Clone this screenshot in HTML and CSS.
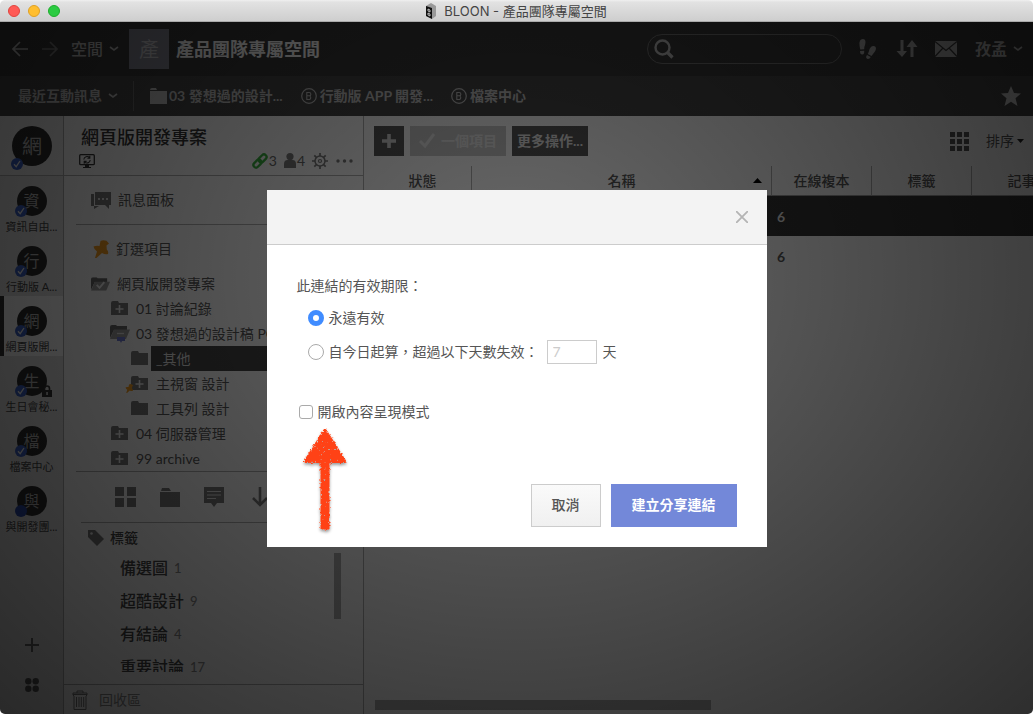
FILE: index.html
```html
<!DOCTYPE html>
<html lang="zh-Hant">
<head>
<meta charset="utf-8">
<title>BLOON - 產品團隊專屬空間</title>
<link rel="stylesheet" href="styles.css">
</head>
<body>
<svg class="defs" aria-hidden="true">
  <symbol id="chevron" viewBox="0 0 10 6"><path d="M1 1l4 3 4-3" fill="none" stroke="currentColor" stroke-width="1.6"/></symbol>
  <symbol id="folder" viewBox="0 0 17 16"><path d="M0 2q0-2 2-2h4l1 2H0zM0 3h17v13H0z" fill="currentColor"/></symbol>
  <symbol id="folder-sm" viewBox="0 0 18 16"><path d="M0 2q0-2 2-2h5l1 2h9v12H0z" fill="currentColor"/></symbol>
  <symbol id="folder-plus" viewBox="0 0 18 16"><path d="M0 2q0-2 2-2h5l1 2h9v12H0z" fill="currentColor"/><path d="M8.500 4v8M4.500 8h8" stroke="#eee" stroke-width="1.600"/></symbol>
  <symbol id="folder-open" viewBox="0 0 20 14"><path d="M0 2q0-2 2-2h4l1 1h10v4H4L0 13z" fill="#666"/><path d="M4 4.500h16l-4 9.500H0z" fill="#999"/></symbol>
  <symbol id="brand" viewBox="0 0 16 16"><circle cx="8" cy="8" r="7.300" fill="none" stroke="currentColor" stroke-width="1.200"/><path d="M5.800 4.500v7h2.700a2 2 0 0 0 0-3.700H5.800h2.400a1.600 1.600 0 0 0 0-3.300z" fill="none" stroke="currentColor" stroke-width="1.100"/></symbol>
  <symbol id="badge" viewBox="0 0 12 12"><circle cx="6" cy="6" r="6" fill="#3a60c4"/><path d="M3 6.300l2.200 2.400L9 3" fill="none" stroke="#eee" stroke-width="1.300"/></symbol>
  <symbol id="pin" viewBox="0 0 17 18"><path d="M7.500 1Q10-.5 13.500 0.800L16 3.500l-2.500 2 .3 4q2 2 1.200 4.500-3 .8-6-1L3.500 18H2l2-6.500Q1 9.500 .5 6.500q2.500-1 6-.5z" fill="#f09a20"/></symbol>
</svg>

<div class="window">
  <header class="titlebar">
    <span class="lights"><i class="light red"></i><i class="light amber"></i><i class="light green"></i></span>
    <svg width="10" height="16" viewBox="0 0 10 16"><path d="M0 3l5-3 5 3v10l-4 3-6-3z" fill="#999"/><path d="M0 3l6 2v11l-6-3z" fill="#111"/><path d="M2 6l2 1v2L2 8zM2 10l2 1v2l-2-1z" fill="none" stroke="#ddd" stroke-width=".8"/></svg>
    <span>BLOON - 產品團隊專屬空間</span>
  </header>

  <div class="app">
    <nav class="topbar">
      <button class="plain" aria-label="上一頁"><svg width="16" height="16" viewBox="0 0 16 16"><path d="M16 8H1M8 1L1 8l7 7" fill="none" stroke="#b4b4b4" stroke-width="1.700"/></svg></button>
      <button class="plain next" aria-label="下一頁"><svg width="16" height="16" viewBox="0 0 16 16"><path d="M0 8h15M8 1l7 7-7 7" fill="none" stroke="#777" stroke-width="1.700"/></svg></button>
      <button class="plain spaces">空間 <svg width="10" height="6"><use href="#chevron"/></svg></button>
      <span class="space-logo">產</span>
      <h1 class="space-name">產品團隊專屬空間</h1>
      <label class="search">
        <svg width="20" height="20" viewBox="0 0 20 20"><circle cx="8.500" cy="8.500" r="7" fill="none" stroke="#b4b4b4" stroke-width="2.400"/><path d="M13.500 13.500l5 5" stroke="#b4b4b4" stroke-width="3.200"/></svg>
        <input type="search" aria-label="搜尋">
      </label>
      <button class="plain steps" aria-label="足跡"><svg width="18" height="20" viewBox="0 0 18 20"><g fill="#aaa"><path d="M4 0C1 0 .3 3 .5 5.500c.1 2 .5 3.500.8 5l3.900-.3Q5 8 6 6C7 3 6.500 0 4 0z"/><path d="M1 12l4.200-.3q.4 3.600-1.900 3.800-2.300.1-2.300-3.500z"/><path d="M14.500 7c3.500.5 2.800 4 1 6l-3 4-3.700-2q.8-1.500 1.200-3C10.500 9.500 12 6.600 14.500 7z"/><path d="M8 16l3.800 2q-1.500 2.500-3.700 1.800-1.900-1-.1-3.800z"/></g></svg></button>
      <button class="plain transfer" aria-label="傳輸"><svg width="22" height="18" viewBox="0 0 22 18"><path d="M4.500 0h3v11h3.500L6 17 .5 11h4zM14.500 17h3V7h4L16 0l-5.500 7h4z" fill="#aaa"/></svg></button>
      <button class="plain mail" aria-label="郵件"><svg width="22" height="16" viewBox="0 0 22 16"><path d="M0 0h22v16H0z" fill="#aaa"/><path d="M0 .5l11 9 11-9M0 15.500L8 7M22 15.500L14 7" fill="none" stroke="#363636" stroke-width="1.200"/></svg></button>
      <button class="plain user">孜孟 <svg width="10" height="6"><use href="#chevron"/></svg></button>
    </nav>

    <nav class="bookmarks">
      <button class="plain recent">最近互動訊息 <svg width="10" height="6"><use href="#chevron"/></svg></button>
      <a href="#" class="mark"><svg width="17" height="16"><use href="#folder"/></svg>03 發想過的設計...</a>
      <a href="#" class="mark"><svg width="16" height="16"><use href="#brand"/></svg>行動版 APP 開發...</a>
      <a href="#" class="mark"><svg width="16" height="16"><use href="#brand"/></svg>檔案中心</a>
      <button class="plain star" aria-label="收藏"><svg width="20" height="20" viewBox="0 0 20 20"><path d="M10 0l3 7 7 .5-5.500 4.700L16.500 20 10 15.800 3.500 20l2-7.800L0 7.500 7 7z" fill="#c8c8c8"/></svg></button>
    </nav>

    <main class="main">
      <aside class="rail">
        <a href="#" class="rail-current" aria-label="網頁版開發專案"><span class="disc">網<svg class="tick" width="12" height="12"><use href="#badge"/></svg></span></a>
        <a href="#" class="rail-item"><span class="disc">資<svg class="tick" width="12" height="12"><use href="#badge"/></svg></span>資訊自由...</a>
        <a href="#" class="rail-item"><span class="disc">行<svg class="tick" width="12" height="12"><use href="#badge"/></svg></span>行動版 A...</a>
        <a href="#" class="rail-item active"><span class="disc">網<svg class="tick" width="12" height="12"><use href="#badge"/></svg></span>網頁版開...</a>
        <a href="#" class="rail-item"><span class="disc">生<svg class="tick" width="12" height="12"><use href="#badge"/></svg><svg class="lock" width="10" height="12" viewBox="0 0 10 12"><path d="M2.500 6V3.500a2.500 2.500 0 0 1 5 0V6" fill="none" stroke="#333" stroke-width="1.600"/><path d="M0 5h10v7H0z" fill="#333"/><path d="M4.300 7h1.500v3H4.300z" fill="#ddd"/></svg></span>生日會秘...</a>
        <a href="#" class="rail-item"><span class="disc">檔<svg class="tick" width="12" height="12"><use href="#badge"/></svg></span>檔案中心</a>
        <a href="#" class="rail-item"><span class="disc">與<svg class="tick" width="12" height="12" viewBox="0 0 12 12"><circle cx="6" cy="6" r="6" fill="#2a48a8"/></svg></span>與開發團...</a>
        <div class="rail-tools">
          <button class="plain" aria-label="新增"><svg width="14" height="14" viewBox="0 0 14 14"><path d="M7 0v14M0 7h14" stroke="#666" stroke-width="2"/></svg></button>
          <button class="plain" aria-label="全部"><svg width="14" height="14" viewBox="0 0 14 14" fill="#555"><circle cx="3.300" cy="3.300" r="3.200"/><circle cx="10.700" cy="3.300" r="3.200"/><circle cx="3.300" cy="10.700" r="3.200"/><circle cx="10.700" cy="10.700" r="3.200"/></svg></button>
        </div>
      </aside>

      <aside class="side">
        <header class="project">
          <h2>網頁版開發專案</h2>
          <div class="project-meta">
            <svg width="16" height="14" viewBox="0 0 16 14"><rect x=".7" y=".7" width="14.600" height="10" rx="1" fill="none" stroke="#333" stroke-width="1.300"/><path d="M6 11h4v2h2v1H4v-1h2z" fill="#333"/><path d="M4.800 5.500A3.200 3.200 0 0 1 10.500 3.800M11.200 6A3.200 3.200 0 0 1 5.500 7.800M10.800 1.800v2.400H8.400M5.200 9.700V7.400h2.400" fill="none" stroke="#333" stroke-width="1.100"/></svg>
            <span class="stat links"><svg width="16" height="16" viewBox="0 0 16 16"><g fill="none" stroke="#38ac3e" stroke-width="2.300"><rect x="-4.500" y="-2.600" width="9" height="5.200" rx="2.600" transform="translate(10.600 5.400) rotate(-45)"/><rect x="-4.500" y="-2.600" width="9" height="5.200" rx="2.600" transform="translate(5.400 10.600) rotate(-45)"/></g></svg>3</span>
            <span class="stat"><svg width="12" height="16" viewBox="0 0 12 16"><path d="M0 15V11q0-4 3.500-4h5Q12 7 12 11v4z" fill="#777"/><circle cx="6" cy="3.600" r="3.600" fill="#777"/></svg>4</span>
            <svg class="gear" width="16" height="16" viewBox="0 0 16 16" fill="none" stroke="#777"><circle cx="8" cy="8" r="5" stroke-width="1.500"/><circle cx="8" cy="8" r="1.500" stroke-width="1.200"/><path d="M8 0v3M8 13v3M0 8h3M13 8h3M2.300 2.300l2.100 2.100M11.600 11.600l2.100 2.100M2.300 13.700l2.100-2.100M11.600 4.400l2.100-2.100" stroke-width="1.700"/></svg>
            <svg width="17" height="4" viewBox="0 0 17 4" fill="#777"><circle cx="2" cy="2" r="1.700"/><circle cx="8.500" cy="2" r="1.700"/><circle cx="15" cy="2" r="1.700"/></svg>
          </div>
        </header>

        <a href="#" class="board"><svg width="20" height="17" viewBox="0 0 20 17"><path d="M4 0h16v13h-2v4l-4-4H4z" fill="#777"/><path d="M0 2h3v12h5l-5 3v-3H0z" fill="#777"/><path d="M7 6h2v2H7zM11 6h2v2h-2zM15 6h2v2h-2z" fill="#ddd"/></svg>訊息面板</a>

        <div class="tree">
          <a href="#" class="pinned"><svg width="17" height="18"><use href="#pin"/></svg>釘選項目</a>
          <a href="#" class="root"><svg width="19" height="14" viewBox="0 0 20 14"><use href="#folder-open" width="20" height="14"/><path d="M6 8l3 3 5-6" fill="none" stroke="#eee" stroke-width="2"/></svg>網頁版開發專案</a>
          <a href="#" class="node"><svg width="18" height="16"><use href="#folder-plus"/></svg><span>01 討論紀錄</span></a>
          <a href="#" class="node"><svg width="20" height="18" viewBox="0 0 20 18"><use href="#folder-open" width="20" height="14"/><path d="M7 8.500h7" stroke="#ddd" stroke-width="1.300"/><path d="M7 12h8v4h-3l-1 2-1-2H7z" fill="#6f7ad0"/></svg><span>03 發想過的設計稿 PO 區</span></a>
          <a href="#" class="node deep selected"><svg width="18" height="16"><use href="#folder-sm"/></svg><span>_其他</span></a>
          <a href="#" class="node deep"><svg width="18" height="16"><use href="#folder-plus"/></svg><svg class="mini-pin" width="8" height="9" viewBox="0 0 17 18"><use href="#pin" width="17" height="18"/></svg><span>主視窗 設計</span></a>
          <a href="#" class="node deep"><svg width="18" height="16"><use href="#folder-sm"/></svg><span>工具列 設計</span></a>
          <a href="#" class="node"><svg width="18" height="16"><use href="#folder-plus"/></svg><span>04 伺服器管理</span></a>
          <a href="#" class="node"><svg width="18" height="16"><use href="#folder-plus"/></svg><span>99 archive</span></a>
        </div>

        <div class="filters">
          <button class="plain" aria-label="格狀"><svg width="21" height="20" viewBox="0 0 21 20"><path d="M0 0h9v9H0zM12 0h9v9h-9zM0 11h9v9H0zM12 11h9v9h-9z" fill="#777"/></svg></button>
          <button class="plain" aria-label="資料夾"><svg width="20" height="19" viewBox="0 0 20 19"><path d="M1 3l1-3h7l2 3zM0 4h20v15H0z" fill="#777"/></svg></button>
          <button class="plain" aria-label="留言"><svg width="20" height="20" viewBox="0 0 20 20"><path d="M0 0h20v16h-7l-3 4-3-4H0z" fill="#777"/><path d="M3 4.500h14M3 8h14M3 11.500h9" stroke="#ddd" stroke-width="1.200"/></svg></button>
          <button class="plain download" aria-label="下載"><svg width="16" height="20" viewBox="0 0 16 20"><path d="M8 0v18M1 11l7 7 7-7" fill="none" stroke="#777" stroke-width="2.600"/></svg></button>
        </div>

        <section class="tags">
          <h3><svg width="16" height="16" viewBox="0 0 16 16"><path d="M0 0h7l9 9-7 7-9-9z" fill="#777"/><circle cx="3.500" cy="3.500" r="1.300" fill="#eee"/></svg>標籤</h3>
          <ul>
            <li>備選圖<small>1</small></li>
            <li>超酷設計<small>9</small></li>
            <li>有結論<small>4</small></li>
            <li>重要討論<small>17</small></li>
          </ul>
          <span class="scroll-thumb"></span>
        </section>

        <a href="#" class="trash"><svg width="16" height="20" viewBox="0 0 16 20"><path d="M1 4.500h14M5 3V1h6v2M1 3h14v2l-1 1v13.500H2V6L1 5zM4.500 7v10M7 7v10M9.300 7v10M11.700 7v10" fill="none" stroke="#777"/></svg>回收區</a>
      </aside>

      <section class="content">
        <div class="toolbar">
          <button class="tool add" aria-label="新增"><svg width="16" height="16" viewBox="0 0 16 16"><path d="M8 1v14M1 8h14" stroke="#ccc" stroke-width="3.600"/></svg></button>
          <button class="tool off"><svg width="16" height="16" viewBox="0 0 16 16"><path d="M1 8l5 5 9-12" fill="none" stroke="#e0e0e0" stroke-width="3"/></svg>一個項目</button>
          <button class="tool more">更多操作...</button>
          <button class="plain grid" aria-label="縮圖檢視"><svg width="19" height="19" viewBox="0 0 19 19"><path d="M0 0h5v5H0zM7 0h5v5H7zM14 0h5v5h-5zM0 7h5v5H0zM7 7h5v5H7zM14 7h5v5h-5zM0 14h5v5H0zM7 14h5v5H7zM14 14h5v5h-5z" fill="#555"/></svg></button>
          <button class="plain sort">排序 <svg width="7" height="4" viewBox="0 0 7 4"><path d="M0 0h7L3.500 4z" fill="#222"/></svg></button>
        </div>
        <table class="files">
          <colgroup><col class="c-state"><col class="c-name"><col class="c-std"><col class="c-std"><col class="c-std"></colgroup>
          <thead><tr><th>狀態</th><th class="sorted">名稱<svg width="9" height="5" viewBox="0 0 9 5"><path d="M0 5h9L4.500 0z" fill="#000"/></svg></th><th>在線複本</th><th>標籤</th><th>記事</th></tr></thead>
          <tbody>
            <tr class="on"><td></td><td></td><td>6</td><td></td><td></td></tr>
            <tr><td></td><td></td><td>6</td><td></td><td></td></tr>
          </tbody>
        </table>
        <div class="scroll-x"><span></span></div>
      </section>
    </main>

    <div class="backdrop">
      <form class="dialog" role="dialog" aria-label="分享連結">
        <header class="dialog-head"><button type="button" class="plain" aria-label="關閉"><svg width="12" height="12" viewBox="0 0 12 12"><path d="M0 0l12 12M12 0L0 12" stroke="#b4b4b4" stroke-width="1.800"/></svg></button></header>
        <div class="dialog-body">
          <p>此連結的有效期限：</p>
          <div class="choice"><input type="radio" name="term" id="forever" checked><label for="forever">永遠有效</label></div>
          <div class="choice"><input type="radio" name="term" id="limited"><label for="limited">自今日起算，超過以下天數失效：</label><input type="text" class="days" id="days" placeholder="7"><label for="days">天</label></div>
          <div class="choice present"><input type="checkbox" id="present"><label for="present">開啟內容呈現模式</label>
            <svg class="arrow" width="52" height="112" viewBox="0 0 52 112">
              <defs>
                <filter id="crayon" x="-20%" y="-10%" width="140%" height="120%">
                  <feTurbulence type="fractalNoise" baseFrequency=".4" numOctaves="2" seed="4" result="n"/>
                  <feDisplacementMap in="SourceGraphic" in2="n" scale="4" xChannelSelector="R" yChannelSelector="G" result="rough"/>
                  <feColorMatrix in="n" type="matrix" values="0 0 0 0 0  0 0 0 0 0  0 0 0 0 0  0 0 -9 0 7.200" result="grain"/>
                  <feComposite in="rough" in2="grain" operator="in" result="ink"/>
                  <feDropShadow in="ink" dx="0" dy="2" stdDeviation="1.500" flood-color="#000" flood-opacity=".4"/>
                </filter>
              </defs>
              <g filter="url(#crayon)" fill="#ff4313" stroke="#ff4313" stroke-linejoin="round"><path d="M26 7L7 37h38z" stroke-width="4"/><path d="M22 36h8v69h-8z" stroke-width="1"/></g>
            </svg>
          </div>
          <footer class="actions"><button type="button" class="btn">取消</button><button type="button" class="btn primary">建立分享連結</button></footer>
        </div>
      </form>
    </div>
  </div>
</div>
</body>
</html>
```

FILE: styles.css
```css
* { box-sizing: border-box; }

body {
  margin: 0;
  background: #fff;
  color: #555;
  font: 14px/20px Lato, "Noto Sans CJK TC", sans-serif;
}

a { color: inherit; text-decoration: none; }
svg { display: block; flex: none; }
h1, h2, h3, p, ul { margin: 0; padding: 0; font-weight: 500; }
button, input { font: inherit; color: inherit; }
.defs { position: absolute; width: 0; height: 0; }
.plain { display: flex; align-items: center; gap: 6px; padding: 0; border: 0; background: none; }

.window { display: flex; flex-direction: column; height: 100vh; border-radius: 5px; overflow: hidden; }

.titlebar {
  position: relative;
  display: flex;
  align-items: center;
  justify-content: center;
  gap: 8px;
  flex: none;
  height: 22px;
  background: linear-gradient(#f0f0f0, #e2e2e2 10%, #cecece);
  border-bottom: 1px solid #aaa;
  color: #444;
  font: 13px/20px Inter, "Noto Sans CJK TC", sans-serif;
}
.lights { position: absolute; left: 8px; top: 5px; display: flex; gap: 8px; }
.light { width: 12px; height: 12px; border-radius: 50%; border: 1px solid; }
.red { background: #ff5a55; border-color: #e0443e; }
.amber { background: #ffbe2f; border-color: #dfa023; }
.green { background: #2bcb42; border-color: #1dad2b; }

.app { position: relative; display: flex; flex-direction: column; flex: 1; min-height: 0; }

/* top bars */
.topbar { display: flex; align-items: center; height: 54px; flex: none; padding: 0 10px 0 12px; background: #363636; color: #b4b4b4; }
.next { margin-left: 14px; }
.spaces { margin-left: 13px; font-size: 16px; font-weight: 500; }
.space-logo { width: 40px; height: 40px; margin: 0 7px 0 10px; background: #7e7f8b; color: #bcbcc0; font-size: 20px; line-height: 40px; text-align: center; }
.space-name { font-size: 18px; font-weight: 700; color: #f4f4f4; margin-right: auto; }
.search { display: flex; align-items: center; width: 195px; height: 30px; padding: 0 6px; border: 1px solid #6c6c6c; border-radius: 15px; }
.search input { flex: 1; min-width: 0; border: 0; background: none; outline: 0; }
.steps { margin-left: 17px; }
.transfer { margin-left: 19px; }
.mail { margin-left: 17px; }
.user { margin-left: 18px; font-size: 16px; font-weight: 700; }

.bookmarks { display: flex; align-items: center; height: 40px; flex: none; padding: 0 12px 0 18px; background: #444; color: #bbb; font-weight: 700; }
.recent { height: 30px; padding-right: 15px; border-right: 1px solid #666; font-weight: 700; }
.mark { display: flex; align-items: center; gap: 3px; margin-left: 18px; }
.recent + .mark { margin-left: 16px; gap: 2px; }
.star { margin-left: auto; }

.main { display: flex; flex: 1; min-height: 0; background: #f4f4f4; }

/* project rail */
.rail { display: flex; flex-direction: column; width: 64px; flex: none; background: #dcdcdc; border-right: 1px solid #a8a8a8; font-size: 11px; line-height: 16px; color: #444; }
.rail-current { height: 60px; padding: 10px 0 0 12px; background: #e6e6e6; border-bottom: 1px solid #aaa; }
.disc { position: relative; display: block; width: 30px; height: 30px; border-radius: 50%; background: #2c2c2c; color: #b4b4b4; font-size: 16px; line-height: 30px; text-align: center; }
.rail-current .disc { width: 40px; height: 40px; font-size: 20px; line-height: 40px; }
.tick { position: absolute; left: -2px; bottom: -1px; }
.rail-current .tick { left: -1px; bottom: -4px; }
.lock { position: absolute; right: -5px; bottom: -1px; }
.rail-item { display: flex; flex-direction: column; align-items: center; gap: 3px; height: 60px; padding-top: 10px; white-space: nowrap; }
.rail-item.active { background: #f8f8f8; box-shadow: inset 4px 0 #333; }
.rail-tools { display: flex; flex-direction: column; align-items: center; gap: 26px; margin-top: auto; padding-bottom: 22px; }

/* project side panel */
.side { display: flex; flex-direction: column; width: 300px; flex: none; border-right: 1px solid #aaa; }
.project { height: 60px; flex: none; padding: 9px 10px 0 17px; border-bottom: 1px solid #aaa; }
.project h2 { font-size: 18px; line-height: 24px; color: #333; }
.project-meta { display: flex; align-items: center; height: 24px; margin-left: -2px; color: #666; }
.stat { display: flex; align-items: center; gap: 1px; margin-right: 7px; }
.links { margin-left: auto; }
.gear { margin-right: 8px; }
.board { display: flex; align-items: center; gap: 7px; height: 49px; flex: none; margin-left: 12px; padding-left: 15px; border-bottom: 1px solid #aaa; }
.tree { flex: none; margin-left: 12px; padding: 11px 0 0 15px; border-bottom: 1px solid #aaa; }
.pinned, .root { display: flex; align-items: center; gap: 7px; height: 25px; }
.pinned { gap: 6px; padding-left: 2px; margin-bottom: 10px; }
.node { position: relative; display: flex; align-items: center; height: 25px; padding-left: 19px; color: #555; }
.node svg { width: 20px; color: #777; }
.node span { flex: 1; margin-left: 1px; padding-left: 5px; line-height: 25px; white-space: nowrap; }
.deep { padding-left: 39px; }
.node .mini-pin { position: absolute; left: 34px; bottom: 3px; width: 9px; }
.selected span { background: #444; color: #ddd; }
.filters { display: flex; gap: 24px; height: 51px; flex: none; align-items: center; margin-left: 17px; padding-left: 34px; border-bottom: 1px solid #aaa; }
.download { margin-left: 4px; }
.tags { position: relative; flex: 1; min-height: 0; overflow: hidden; padding: 5px 0 0 24px; color: #444; margin-bottom: 12px; }
.tags h3 { display: flex; align-items: center; gap: 6px; font-size: 14px; line-height: 20px; }
.tags ul { list-style: none; padding: 3px 0 0 32px; }
.tags li { display: flex; align-items: center; gap: 6px; height: 33px; font-size: 16px; line-height: 24px; }
.tags small { font-size: 13px; color: #888; }
.scroll-thumb { position: absolute; right: 22px; top: 30px; width: 7px; height: 66px; background: #aaa; }
.trash { display: flex; align-items: center; gap: 11px; height: 30px; flex: none; padding-left: 8px; border-top: 1px solid #aaa; color: #888; }

/* file list */
.content { display: flex; flex-direction: column; flex: 1; min-width: 0; overflow: hidden; }
.toolbar { display: flex; align-items: center; gap: 6px; height: 50px; flex: none; padding: 0 9px 0 10px; }
.tool { display: flex; align-items: center; justify-content: center; gap: 6px; height: 30px; border: 0; background: #555; color: #ddd; font-weight: 700; }
.add { width: 30px; padding: 0; }
.off { width: 96px; padding: 0; background: #c2c2c2; color: #e0e0e0; }
.more { padding: 0 5px; }
.grid { margin-left: auto; }
.sort { gap: 3px; margin-left: 11px; }
.files { width: 707px; flex: none; table-layout: fixed; border-collapse: separate; border-spacing: 0; }
.c-state { width: 107px; }
.c-name { width: 300px; }
.c-std { width: 100px; }
.files th { position: relative; height: 30px; padding: 0; border-bottom: 1px solid #999; border-left: 1px solid #aaa; font-weight: 500; }
.files th:first-child { border-left: 0; padding-left: 10px; }
.sorted svg { position: absolute; right: 9px; top: 12px; }
.files td { height: 40px; padding: 2px 6px 0; font-weight: 700; }
.on td { background: #333; color: #ddd; }
.scroll-x { margin-top: auto; padding: 0 0 4px 11px; }
.scroll-x span { display: block; width: 51%; height: 10px; background: #aaa; }

/* share dialog */
.backdrop {
  position: absolute;
  inset: 0;
  display: flex;
  align-items: center;
  justify-content: center;
  background: radial-gradient(ellipse farthest-corner at 50% 37%, rgba(0, 0, 0, .57), rgba(0, 0, 0, .81));
}
.dialog { width: 500px; background: #fff; }
.dialog-head { display: flex; align-items: center; justify-content: flex-end; height: 55px; padding-right: 19px; background: #f3f3f3; border-bottom: 1px solid #ccc; }
.dialog-body { padding: 31px 30px 20px; }
.choice { position: relative; display: flex; align-items: center; height: 24px; margin: 10px 0 0 11px; }
.dialog p { line-height: 20px; font-weight: 400; }
.choice input[type="radio"], .choice input[type="checkbox"] { appearance: none; width: 16px; height: 16px; margin: 0 5px 0 0; border: 1px solid #aaa; border-radius: 50%; background: #fff; }
.choice input[type="radio"]:checked { border: 5px solid #408cff; }
.choice input[type="checkbox"] { width: 14px; height: 14px; border-radius: 3px; }
.choice .days { width: 50px; height: 24px; margin: 0 6px 0 8px; padding: 0 5px; border: 1px solid #ccc; }
.days::placeholder { color: #ccc; }
.present { margin: 36px 0 0 2px; }
.arrow { position: absolute; left: 0; top: 24px; }
.actions { display: flex; justify-content: flex-end; gap: 10px; margin-top: 60px; }
.btn { height: 43px; padding: 0 20px; border: 1px solid #ccc; background: linear-gradient(#fafafa, #f0f0f0); font-weight: 500; }
.primary { padding: 0 21px; border: 0; background: #7388d9; color: #fff; font-weight: 700; }
```
